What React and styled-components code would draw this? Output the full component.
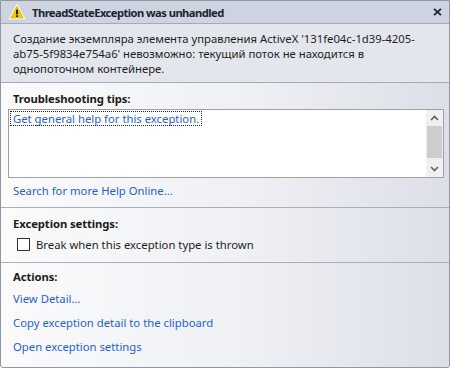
import React from 'react';
import styled, { createGlobalStyle } from 'styled-components';

const GlobalStyle = createGlobalStyle`
	html, body {
		margin: 0;
		padding: 0;
		background: #ffffff;
	}
	body {
		font-family: "Noto Sans", "Open Sans", sans-serif;
		font-size: 11.3px;
		color: #1e1e1e;
	}
`;

const Dialog = styled.div`
	width: 450px;
	height: 368px;
	box-sizing: border-box;
	border: 1px solid #8e97a5;
	border-radius: 0 0 3px 3px;
	display: flex;
	flex-direction: column;
	overflow: hidden;
	background: linear-gradient(to right, #fbfbfc 0%, #eef0f4 55%, #dcdfe8 100%);
`;

const TitleBar = styled.div`
	height: 22px;
	display: flex;
	align-items: center;
	padding: 0 0 0 8px;
	background: #cdd4df;
	border-bottom: 1px solid #a3abb8;
`;

const TitleText = styled.div`
	flex: 1;
	margin-left: 7px;
	font-weight: 700;
	font-size: 11.2px;
	letter-spacing: -0.55px;
	color: #1b2230;
`;

const CloseButton = styled.div`
	width: 20px;
	height: 22px;
	display: flex;
	align-items: center;
	justify-content: center;
	margin-right: 2px;
`;

const Message = styled.div`
	height: 51px;
	padding: 7px 10px 0 12px;
	line-height: 15px;
	background: #e3e6ec;
	border-bottom: 1px solid #a3abb8;
`;

const Section = styled.div`
	padding: ${p => p.$top}px 0 ${p => p.$bottom}px 12px;
	border-bottom: ${p => (p.$last ? 'none' : '1px solid #a7afbb')};
	display: flex;
	flex-direction: column;
	align-items: flex-start;
`;

const SectionTitle = styled.div`
	font-weight: 700;
	line-height: 15px;
	letter-spacing: -0.1px;
	color: #1b1b1b;
`;

const TipsBox = styled.div`
	margin: 3px 0 0 -5px;
	width: 436px;
	height: 69px;
	box-sizing: border-box;
	border: 1px solid #a0a0a0;
	background: #ffffff;
	display: flex;
`;

const TipsList = styled.div`
	flex: 1;
	padding: 1px 0 0 1px;
`;

const Link = styled.a`
	display: inline-block;
	color: #1f62cc;
	text-decoration: none;
	line-height: 15px;
	margin-top: ${p => p.$top || 0}px;
	cursor: pointer;
`;

const FocusedLink = styled(Link)`
	outline: 1px dotted #222;
	outline-offset: -1px;
	padding: 0 3px;
`;

const ScrollBar = styled.div`
	width: 17px;
	background: #f0f0f0;
	display: flex;
	flex-direction: column;
	align-items: center;
`;

const ScrollArrow = styled.div`
	height: 16px;
	width: 100%;
	display: flex;
	align-items: center;
	justify-content: center;
`;

const ScrollThumb = styled.div`
	width: 15px;
	height: 32px;
	background: #cdcdcd;
`;

const ScrollTrack = styled.div`
	flex: 1;
`;

const CheckRow = styled.label`
	display: flex;
	align-items: center;
	margin: 7px 0 0 4px;
	line-height: 13px;
`;

const CheckBox = styled.span`
	width: 13px;
	height: 13px;
	box-sizing: border-box;
	border: 1px solid #333333;
	background: #ffffff;
	margin-right: 6px;
`;

const ActionList = styled.div`
	display: flex;
	flex-direction: column;
	align-items: flex-start;
	gap: 9px;
	margin-top: 7px;
`;

const WarningIcon = () => (
	<svg width="16" height="16" viewBox="0 0 16 16">
		<path d="M8 0.8 L15.4 14.6 L0.6 14.6 Z" fill="#ffffff" stroke="#ffffff" strokeWidth="1.4" strokeLinejoin="round" />
		<path d="M8 2 L14.4 14 L1.6 14 Z" fill="#f6c600" stroke="#e0a800" strokeWidth="0.6" strokeLinejoin="round" />
		<rect x="7.1" y="5.6" width="1.8" height="4.8" fill="#111" />
		<rect x="7.1" y="11.3" width="1.8" height="1.7" fill="#111" />
	</svg>
);

const CloseIcon = () => (
	<svg width="9" height="8" viewBox="0 0 9 8">
		<path d="M1 0.8 L8 7.2 M8 0.8 L1 7.2" stroke="#1e2634" strokeWidth="1.8" />
	</svg>
);

const Chevron = ({ up }) => (
	<svg width="9" height="6" viewBox="0 0 9 6">
		<path d={up ? 'M1 5 L4.5 1.5 L8 5' : 'M1 1 L4.5 4.5 L8 1'} fill="none" stroke="#606060" strokeWidth="1.6" />
	</svg>
);

const App = () => (
	<>
		<GlobalStyle />
		<Dialog>
			<TitleBar>
				<WarningIcon />
				<TitleText>ThreadStateException was unhandled</TitleText>
				<CloseButton><CloseIcon /></CloseButton>
			</TitleBar>
			<Message>
				Создание экземпляра элемента управления ActiveX '131fe04c-1d39-4205-ab75-5f9834e754a6' невозможно: текущий поток не находится в однопоточном контейнере.
			</Message>
			<Section $top={8} $bottom={9}>
				<SectionTitle>Troubleshooting tips:</SectionTitle>
				<TipsBox>
					<TipsList>
						<FocusedLink>Get general help for this exception.</FocusedLink>
					</TipsList>
					<ScrollBar>
						<ScrollArrow><Chevron up /></ScrollArrow>
						<ScrollThumb />
						<ScrollTrack />
						<ScrollArrow><Chevron /></ScrollArrow>
					</ScrollBar>
				</TipsBox>
				<Link $top={5}>Search for more Help Online...</Link>
			</Section>
			<Section $top={8} $bottom={11}>
				<SectionTitle>Exception settings:</SectionTitle>
				<CheckRow>
					<CheckBox />
					Break when this exception type is thrown
				</CheckRow>
			</Section>
			<Section $top={6} $bottom={0} $last>
				<SectionTitle>Actions:</SectionTitle>
				<ActionList>
					<Link>View Detail...</Link>
					<Link>Copy exception detail to the clipboard</Link>
					<Link>Open exception settings</Link>
				</ActionList>
			</Section>
		</Dialog>
	</>
);

export default App;
